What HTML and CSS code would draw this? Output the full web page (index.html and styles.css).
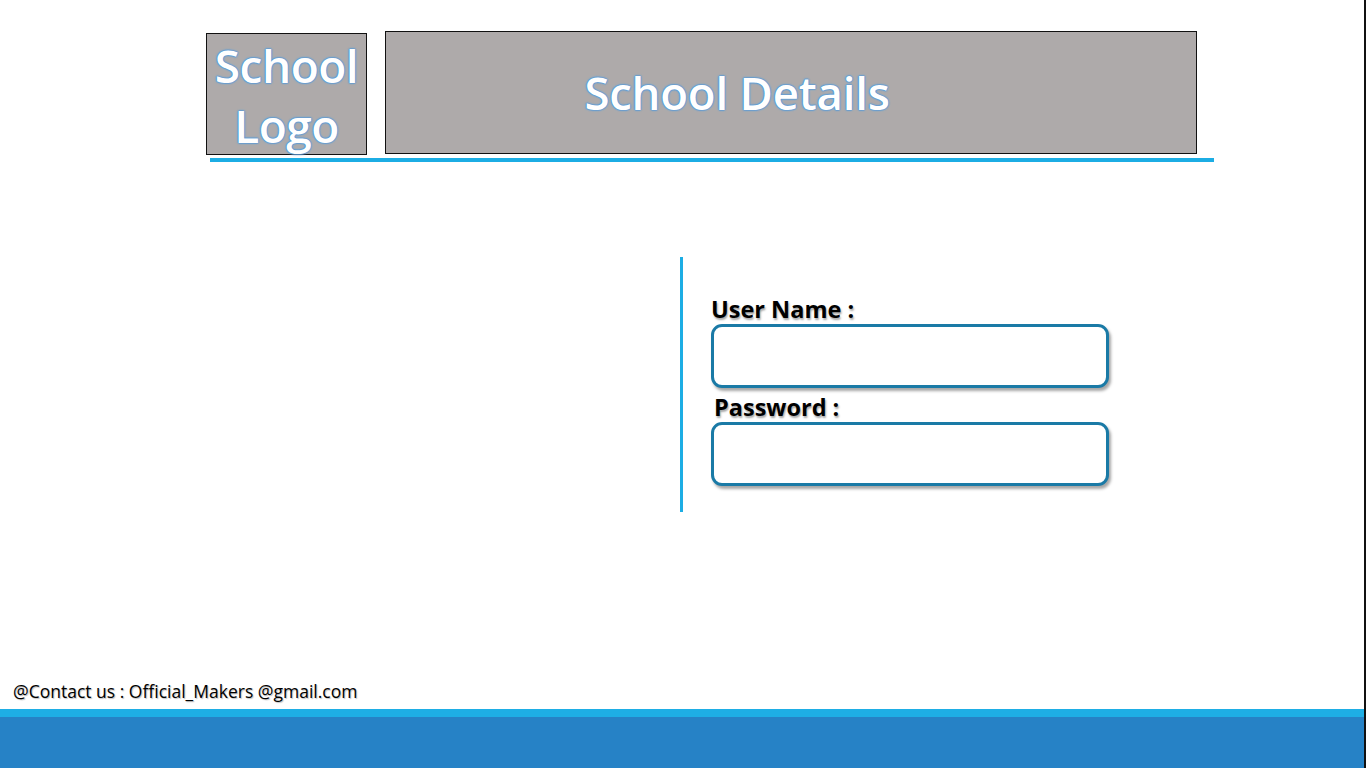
FILE: index.html
```html
<!DOCTYPE html>
<html lang="en">
<head>
<meta charset="utf-8">
<title>School Login</title>
<link rel="stylesheet" href="styles.css">
</head>
<body>
<div class="slide">
  <header class="header">
    <div class="logo-box"><span class="glow logo-text">School<br>Logo</span></div>
    <div class="details-box"><span class="glow details-text">School Details</span></div>
  </header>
  <div class="rule"></div>
  <main class="main">
    <section class="login">
      <label class="label label-user">User Name :</label>
      <div class="field"></div>
      <label class="label label-pass">Password :</label>
      <div class="field"></div>
    </section>
  </main>
  <footer class="footer">
    <p class="contact">@Contact us : Official_Makers @gmail.com</p>
    <div class="band-light"></div>
    <div class="band-dark"></div>
  </footer>
</div>
</body>
</html>
```
FILE: styles.css
```css
* { box-sizing: border-box; }
html, body { margin: 0; padding: 0; background: #fff; }
body { font-family: "Open Sans", "Noto Sans", sans-serif; }
.slide {
  width: 1366px;
  height: 768px;
  border-right: 2px solid #111;
  display: flex;
  flex-direction: column;
  overflow: hidden;
}
.header {
  display: flex;
  align-items: flex-start;
  padding: 31px 0 0 206px;
}
.logo-box {
  margin-top: 2px;
  width: 161px;
  height: 122px;
  background: #aeaaaa;
  border: 1.5px solid #111;
  display: flex;
  align-items: center;
  justify-content: center;
  text-align: center;
}
.details-box {
  margin-left: 18px;
  width: 812px;
  height: 123px;
  background: #aeaaaa;
  border: 1.5px solid #111;
  display: flex;
  align-items: center;
  justify-content: center;
}
.glow {
  color: #fff;
  font-weight: 600;
  text-shadow: 0 0 1px #4f93d2, 0 0 1px #4f93d2, 0 0 1.5px #4f93d2, 0 0 2px #5b9bd5, 0 0 2px #5b9bd5, 0 0 3px #8ab8e3;
}
.logo-text {
  font-size: 46px;
  line-height: 60px;
  letter-spacing: -0.5px;
  margin-top: 2px;
}
.details-text {
  font-size: 45.5px;
  letter-spacing: -0.2px;
  margin-right: 108px;
  margin-top: -2px;
}
.rule {
  margin: 3px 0 0 210px;
  width: 1004px;
  height: 4px;
  background: #1cade4;
}
.main {
  padding: 95px 0 0 680px;
}
.login {
  border-left: 3px solid #1cade4;
  height: 255px;
  padding: 37px 0 0 28px;
  display: flex;
  flex-direction: column;
  align-items: flex-start;
}
.label {
  font-weight: 700;
  font-size: 23.5px;
  line-height: 30px;
  color: #000;
  text-shadow: 1px 2px 2px rgba(0, 0, 0, 0.35);
}
.label-pass { margin-left: 3px; margin-top: 4px; }
.field {
  width: 398px;
  height: 64px;
  border: 3px solid #1a7aa6;
  border-radius: 11px;
  box-shadow: 2px 3px 3px rgba(0, 0, 0, 0.35);
  background: #fff;
}
.footer {
  margin-top: auto;
}
.contact {
  margin: 0 0 6px 13px;
  font-size: 17.5px;
  line-height: 24px;
  color: #000;
  text-shadow: 1px 1px 1px rgba(0, 0, 0, 0.25);
}
.band-light { height: 8px; background: #1eaee5; }
.band-dark { height: 51px; background: #2682c6; }
```
